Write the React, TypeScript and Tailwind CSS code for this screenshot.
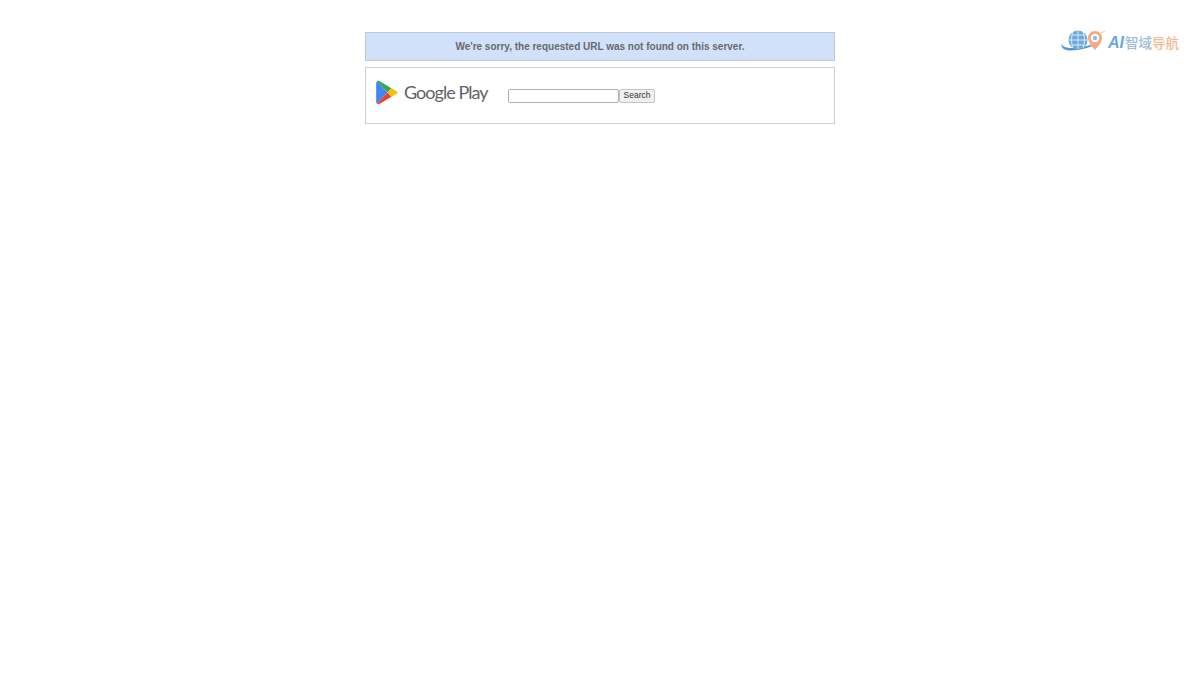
import React from "react";

function PlayIcon() {
  return (
    <svg width="22" height="25" viewBox="0 0 22 25" className="block">
      <path d="M1 1.2 L11.4 12.5 L1 23.8 C0.4 23.4 0.2 22.8 0.2 22 V3 C0.2 2.2 0.4 1.6 1 1.2Z" fill="#4285f4" />
      <path d="M1 1.2 C1.7 0.6 2.6 0.6 3.4 1.1 L15.4 8.2 L11.4 12.5Z" fill="#34a853" />
      <path d="M1 23.8 C1.7 24.4 2.6 24.4 3.4 23.9 L15.4 16.8 L11.4 12.5Z" fill="#ea4335" />
      <path d="M15.4 8.2 L20.6 11.2 C21.8 11.9 21.8 13.1 20.6 13.8 L15.4 16.8 L11.4 12.5Z" fill="#fbbc04" />
    </svg>
  );
}

function SiteLogo() {
  return (
    <div className="absolute left-[1061px] top-[30px] flex h-[22px] w-[120px] items-center">
      <svg width="46" height="22" viewBox="0 0 46 22" className="shrink-0">
        <path d="M0.5 14 C0 18 3 20.5 10 20.5 C20 20.5 32 17 40 11 C32 15 20 18 11 18 C6 18 2 17 0.5 14Z" fill="#5b97cf" />
        <circle cx="17" cy="10" r="9.5" fill="#6ea8dc" />
        <path d="M10 5 H24 M8 10 H26 M10 15 H24 M17 1 V19 M12 2 C10 7 10 13 12 18 M22 2 C24 7 24 13 22 18" stroke="#d7e9f8" strokeWidth="1" fill="none" />
        <path d="M34 1 C29.5 1 27 4.5 27 8 C27 13 34 20 34 20 C34 20 41 13 41 8 C41 4.5 38.5 1 34 1Z" fill="#f2ab84" />
        <circle cx="34" cy="8" r="4.2" fill="#ffffff" />
        <circle cx="34" cy="8" r="2.2" fill="#8bbbe4" />
        <path d="M38 4 L44 1" stroke="#f5c78e" strokeWidth="1" />
      </svg>
      <span className="ml-[1px] mt-[3px] font-['Liberation_Sans',sans-serif] text-[16px] font-bold italic leading-none text-[#6ea6de]">AI</span>
      <span className="ml-[1px] mt-[3px] font-['Noto_Sans_CJK_SC',sans-serif] text-[13.5px] font-medium leading-none text-[#9dbcd8]">智域</span>
      <span className="mt-[3px] font-['Noto_Sans_CJK_SC',sans-serif] text-[13.5px] font-medium leading-none text-[#f3ba90]">导航</span>
    </div>
  );
}

export default function App() {
  return (
    <div className="relative min-h-[700px] bg-white font-['Liberation_Sans',Arial,sans-serif]">
      <SiteLogo />
      <div className="mx-auto flex w-[470px] flex-col gap-[6px] pt-[32px]">
        <div className="flex h-[29px] items-center justify-center border border-[#bcc8d8] bg-[#d2e1fa] text-[10px] font-bold text-[#666a70]">
          We're sorry, the requested URL was not found on this server.
        </div>
        <div className="flex h-[57px] border border-[#cbced2] bg-white">
          <div className="flex h-[48px] w-[142px] shrink-0 items-center pl-[10px]">
            <PlayIcon />
            <span className="ml-[6px] font-['Lato',sans-serif] text-[18px] leading-none tracking-[-0.95px] text-[#5f6368]">Google Play</span>
          </div>
          <form className="flex items-start pt-[21px]">
            <input type="text" className="h-[14px] w-[111px] rounded-[2px] border border-[#b0b0b0] bg-white" />
            <button type="button" className="flex h-[14px] w-[36px] items-center justify-center rounded-[2px] border border-[#c4c4c4] bg-[#f0f0f0] pb-[1px] text-[8.5px] leading-none text-[#333333]">Search</button>
          </form>
        </div>
      </div>
    </div>
  );
}
